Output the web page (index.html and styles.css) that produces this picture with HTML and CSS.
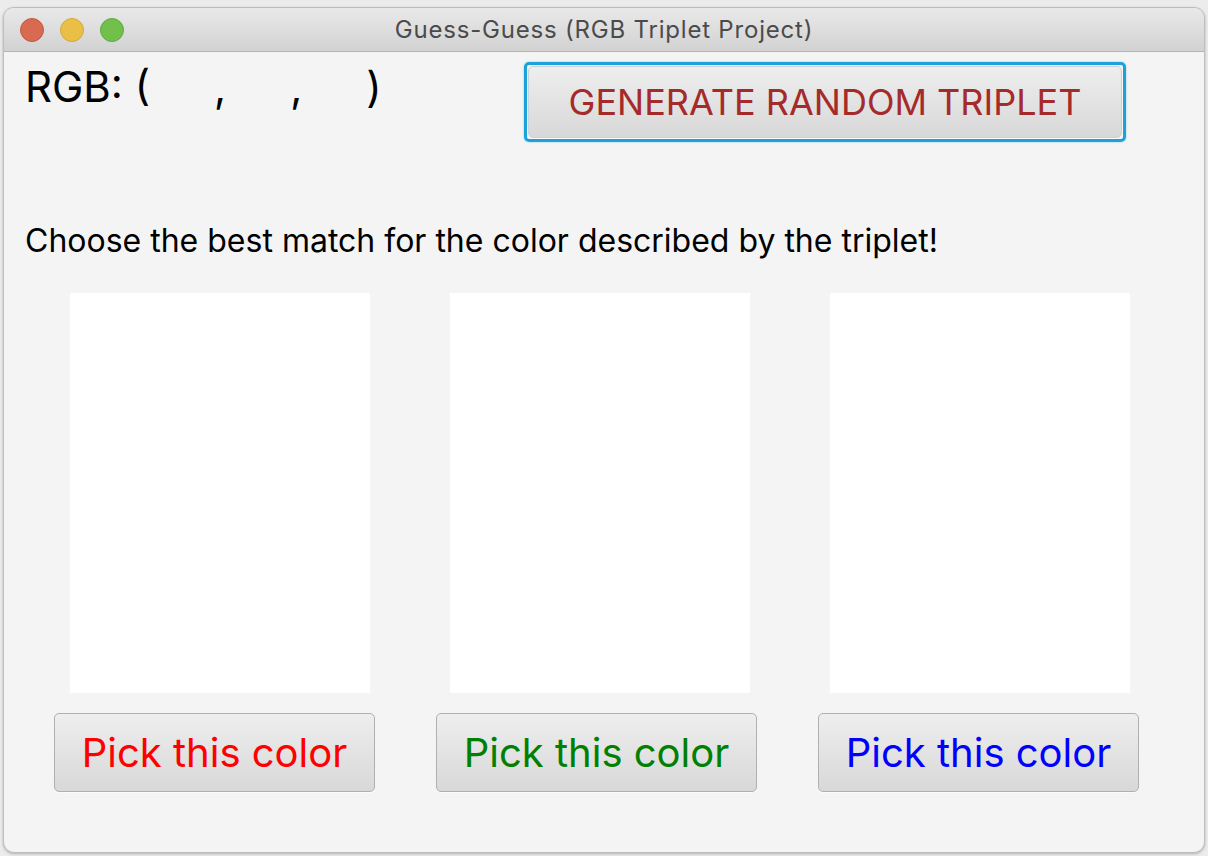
FILE: index.html
```html
<!DOCTYPE html>
<html>
<head>
<meta charset="utf-8">
<link rel="stylesheet" href="styles.css">
</head>
<body>
<div class="window">
  <div class="titlebar">
    <div class="lights">
      <span class="light red"></span>
      <span class="light yellow"></span>
      <span class="light green"></span>
    </div>
    <div class="title">Guess-Guess (RGB Triplet Project)</div>
  </div>
  <div class="content">
    <div class="header">
      <div class="rgb">RGB: (<span class="gap"></span>,<span class="gap"></span>,<span class="gap"></span>)</div>
      <div class="focus-ring"><button class="btn gen">GENERATE RANDOM TRIPLET</button></div>
    </div>
    <p class="prompt">Choose the best match for the color described by the triplet!</p>
    <div class="swatches">
      <div class="swatch"></div>
      <div class="swatch"></div>
      <div class="swatch"></div>
    </div>
    <div class="picks">
      <button class="btn pick red-text">Pick this color</button>
      <button class="btn pick green-text">Pick this color</button>
      <button class="btn pick blue-text">Pick this color</button>
    </div>
  </div>
</div>
</body>
</html>
```

FILE: styles.css
```css
html, body {
  margin: 0;
  padding: 0;
}
body {
  background: #ececec;
  font-family: Inter, "Noto Sans", sans-serif;
  width: 1208px;
  height: 856px;
  overflow: hidden;
}
.window {
  margin: 7px 0 0 3px;
  width: 1200px;
  height: 844px;
  border: 1px solid #bdbdbd;
  border-radius: 11px;
  background: #f4f4f4;
  overflow: hidden;
  box-shadow: 0 1px 3px rgba(0,0,0,0.25);
}
.titlebar {
  height: 43px;
  background: linear-gradient(#e9e9e9, #d2d2d2);
  border-bottom: 1px solid #b4b4b4;
  display: flex;
  align-items: center;
  position: relative;
}
.lights {
  display: flex;
  gap: 16px;
  padding-left: 16px;
}
.light {
  width: 24px;
  height: 24px;
  border-radius: 50%;
  box-sizing: border-box;
}
.light.red { background: #d86a52; border: 1px solid #c25a44; }
.light.yellow { background: #e9c045; border: 1px solid #d3a83a; }
.light.green { background: #71c04b; border: 1px solid #5ea93e; }
.title {
  position: absolute;
  left: 0;
  right: 0;
  text-align: center;
  font-size: 24px;
  letter-spacing: 0.8px;
  color: #4b4b4b;
  pointer-events: none;
}
.content {
  padding: 0 0 0 21px;
}
.header {
  display: flex;
  align-items: flex-start;
  height: 169px;
}
.rgb {
  width: 499px;
  font-size: 42px;
  color: #000;
  line-height: 1;
  padding-top: 14px;
  white-space: pre;
}
.gap {
  display: inline-block;
  width: 64px;
}
.focus-ring {
  margin-top: 10px;
  border: 3px solid #1ca1d8;
  border-radius: 5px;
  padding: 1px;
  box-shadow: 0 0 2px rgba(28,161,216,0.5);
}
.btn {
  font-family: Inter, "Noto Sans", sans-serif;
  background: linear-gradient(#eeeeee, #d8d8d8);
  border: 1.5px solid #b0b0b0;
  border-radius: 5px;
  box-shadow: 0 1px 0 #fbfbfb;
  display: block;
  cursor: default;
  padding: 0;
}
.gen {
  width: 594px;
  height: 72px;
  font-size: 36px;
  color: #a52a2a;
  border-color: #c7d3da;
}
.prompt {
  margin: 0;
  font-size: 32px;
  line-height: 40px;
  color: #000;
}
.swatches {
  display: flex;
  gap: 80px;
  padding-left: 45px;
  margin-top: 32px;
}
.swatch {
  width: 300px;
  height: 400px;
  background: #fff;
}
.picks {
  display: flex;
  gap: 61px;
  padding-left: 29px;
  margin-top: 20px;
}
.pick {
  width: 321px;
  height: 79px;
  font-size: 40px;
}
.red-text { color: #ff0000; }
.green-text { color: #008000; }
.blue-text { color: #0000ff; }
```
